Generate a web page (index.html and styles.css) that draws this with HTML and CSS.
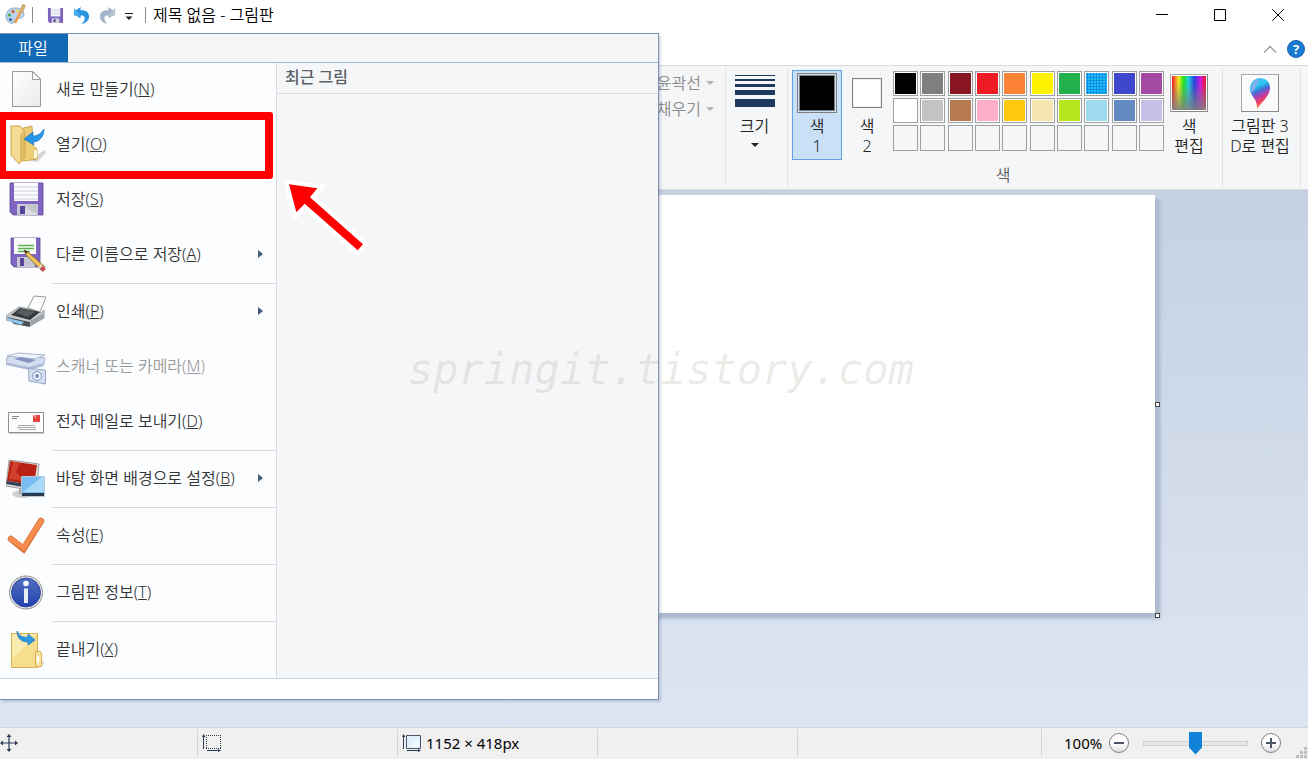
FILE: index.html
```html
<!DOCTYPE html>
<html lang="ko">
<head>
<meta charset="utf-8">
<title>제목 없음 - 그림판</title>
<link rel="stylesheet" href="styles.css">
</head>
<body>
<div class="window">
  <header class="titlebar">
    <svg class="app-icon" viewBox="0 0 22 22" aria-hidden="true">
      <path d="M10 4C4 4 1 8 1 12.500C1 17 5 20 8 19C10 18 9 16 11 15C14 13.500 18 15 19 11C19 6 15 4 10 4Z" fill="#b9d6ea" stroke="#8ba9c0"/>
      <circle cx="4.500" cy="11" r="1.600" fill="#4aa34f"/><circle cx="8" cy="7.500" r="1.600" fill="#e4553a"/><circle cx="12.500" cy="7" r="1.500" fill="#f2d14e"/><circle cx="5.500" cy="15.500" r="1.600" fill="#3e64b8"/>
      <path d="M10 19L16.500 6" stroke="#ec9a4a" stroke-width="2.500"/><path d="M16.500 7L18.500 2" stroke="#d0b078" stroke-width="4" stroke-linecap="round"/>
    </svg>
    <span class="divider"></span>
    <button class="quick" aria-label="저장">
      <svg viewBox="0 0 18 18"><path d="M1 1H17V17H3L1 15Z" fill="#7d63bd"/><path d="M4 1H14V10H4Z" fill="#f3f5fa"/><path d="M5 3.500H13M5 6.500H13" stroke="#c9ccda"/><path d="M5 12H13V17H5Z" fill="#cfd2dc"/><path d="M7 13H9V16H7Z" fill="#4e3e8c"/></svg>
    </button>
    <button class="quick" aria-label="실행 취소">
      <svg viewBox="0 0 18 18"><path d="M1 5L8 0V3.500C14 3 17 6 17 10C17 14 14 17 9 18C12 15 13 12.500 12 10.500C11.300 9 10 8.800 8 9V12L1 8Z" fill="#2b95e2"/><path d="M1 1V9L8 9" fill="#4cafee"/></svg>
    </button>
    <button class="quick" aria-label="다시 실행">
      <svg viewBox="0 0 18 18"><path d="M17 5L10 0V3.500C4 3 1 6 1 10C1 14 4 17 9 18C6 15 5 12.500 6 10.500C6.700 9 8 8.800 10 9V12L17 8Z" fill="#a3b3c7"/><path d="M17 1V9L10 9" fill="#b8c5d4"/></svg>
    </button>
    <button class="quick customize" aria-label="빠른 실행 도구 모음 사용자 지정">
      <svg viewBox="0 0 8 8"><path d="M0 .5H8" stroke="#222"/><path d="M.5 3.500H7.500L4 7Z" fill="#222"/></svg>
    </button>
    <span class="divider"></span>
    <h1 class="title">제목 없음 - 그림판</h1>
    <div class="controls">
      <button aria-label="최소화"><svg viewBox="0 0 12 12"><path d="M0 5.500H12" stroke="#000"/></svg></button>
      <button aria-label="최대화"><svg viewBox="0 0 12 12"><path d="M.5 .5H11.500V11.500H.5Z" fill="none" stroke="#000"/></svg></button>
      <button aria-label="닫기"><svg viewBox="0 0 12 12"><path d="M.2 .2L11.800 11.800M11.800 .2L.2 11.800" stroke="#000"/></svg></button>
    </div>
  </header>

  <div class="tabrow">
    <button class="collapse" aria-label="리본 최소화"><svg viewBox="0 0 14 8"><path d="M1 7.500L7 1.500L13 7.500" fill="none" stroke="#a0a0a0" stroke-width="1.500"/></svg></button>
    <button class="help" aria-label="도움말">?</button>
  </div>

  <section class="ribbon" aria-label="리본">
    <div class="group shapes">
      <button class="drop" disabled>윤곽선<i class="caret"></i></button>
      <button class="drop" disabled>채우기<i class="caret"></i></button>
    </div>
    <div class="group size">
      <button class="tool">
        <svg class="art" viewBox="0 0 40 40"><path d="M0 2H40V3H0ZM0 6H40V8H0ZM0 11H40V14H0ZM0 17H40V22H0ZM0 26H40V34H0Z" fill="#1e3a5f"/></svg>
        <span>크기</span><i class="caret dark"></i>
      </button>
    </div>
    <div class="group colors">
      <div class="group-body">
        <button class="tool selected"><span class="art"><span class="well primary"></span></span><span>색<br>1</span></button>
        <button class="tool"><span class="art"><span class="well"></span></span><span>색<br>2</span></button>
        <div class="palette">
          <button class="swatch black" aria-label="검정"></button><button class="swatch gray" aria-label="회색-50%"></button><button class="swatch maroon" aria-label="진한 빨강"></button><button class="swatch red" aria-label="빨강"></button><button class="swatch orange" aria-label="주황"></button><button class="swatch yellow" aria-label="노랑"></button><button class="swatch green" aria-label="녹색"></button><button class="swatch turquoise" aria-label="옥색"></button><button class="swatch indigo" aria-label="남색"></button><button class="swatch purple" aria-label="자주"></button>
          <button class="swatch white" aria-label="흰색"></button><button class="swatch silver" aria-label="회색-25%"></button><button class="swatch brown" aria-label="갈색"></button><button class="swatch rose" aria-label="장미"></button><button class="swatch gold" aria-label="황금색"></button><button class="swatch cream" aria-label="연한 노랑"></button><button class="swatch lime" aria-label="라임"></button><button class="swatch sky" aria-label="연한 옥색"></button><button class="swatch steel" aria-label="청회색"></button><button class="swatch lavender" aria-label="연보라"></button>
          <button class="swatch" aria-label="사용자 지정 1"></button><button class="swatch" aria-label="사용자 지정 2"></button><button class="swatch" aria-label="사용자 지정 3"></button><button class="swatch" aria-label="사용자 지정 4"></button><button class="swatch" aria-label="사용자 지정 5"></button><button class="swatch" aria-label="사용자 지정 6"></button><button class="swatch" aria-label="사용자 지정 7"></button><button class="swatch" aria-label="사용자 지정 8"></button><button class="swatch" aria-label="사용자 지정 9"></button><button class="swatch" aria-label="사용자 지정 10"></button>
        </div>
        <button class="tool"><span class="art"><span class="picture spectrum"></span></span><span>색<br>편집</span></button>
      </div>
      <div class="group-name">색</div>
    </div>
    <div class="group paint3d">
      <button class="tool">
        <span class="art"><span class="picture"><svg viewBox="0 0 34 34">
          <defs><linearGradient id="drop" x1="0.300" y1="0" x2="0.600" y2="1"><stop offset="0" stop-color="#5cb8f0"/><stop offset=".25" stop-color="#26c8ee"/><stop offset=".42" stop-color="#3f6fd4"/><stop offset=".58" stop-color="#b33fae"/><stop offset=".75" stop-color="#ee3d62"/><stop offset="1" stop-color="#fbb03b"/></linearGradient></defs>
          <path d="M17 2C11 2 7 7 7 13C7 20 15 23 14 33C17 28 27 20 27 12C27 6 23 2 17 2Z" fill="url(#drop)"/><path d="M8 11C10 6 12 4 16 4C13 10 12 14 9 17C8 15 7.500 13 8 11Z" fill="#a6a5ec" opacity=".7"/>
        </svg></span></span>
        <span>그림판 3<br>D로 편집</span>
      </button>
    </div>
  </section>

  <main class="workspace">
    <div class="canvas"><i class="handle side"></i><i class="handle corner"></i></div>
  </main>

  <footer class="status">
    <div class="cell"><svg viewBox="0 0 18 18"><path d="M9 1V17M1 9H17" stroke="#2b3a55" stroke-width="1.200"/><path d="M9 0L11.500 3H6.500ZM9 18L6.500 15H11.500ZM0 9L3 6.500V11.500ZM18 9L15 11.500V6.500Z" fill="#2b3a55"/></svg></div>
    <div class="cell"><svg class="wide" viewBox="0 0 20 18"><path d="M4 1.500H19M4 14.500H19M4.500 1V15M18.500 1V15" fill="none" stroke="#333d50" stroke-dasharray="1 1"/><path d="M1.500 15V2M5 16.500H17" stroke="#2b3a55"/><path d="M1.500 0L3.500 3H0ZM19 16.500L16 18V15Z" fill="#2b3a55"/></svg></div>
    <div class="cell"><svg class="wide" viewBox="0 0 20 18"><path d="M4.500 1.500H18.500V14.500H4.500Z" fill="#dff0fa" stroke="#4c5668"/><path d="M7 13L17 3V13Z" fill="#fff" opacity=".6"/><path d="M1.500 15V2M5 16.500H17" stroke="#2b3a55"/><path d="M1.500 0L3.500 3H0ZM19 16.500L16 18V15Z" fill="#2b3a55"/></svg><span>1152 × 418px</span></div>
    <div class="cell"></div>
    <div class="cell grow"></div>
    <div class="zoom">
      <label for="zoom">100%</label>
      <button class="round" aria-label="축소"><svg viewBox="0 0 10 10"><path d="M0 5H10" stroke="#4c5668" stroke-width="2"/></svg></button>
      <input id="zoom" type="range" min="0" max="100" value="50">
      <button class="round" aria-label="확대"><svg viewBox="0 0 10 10"><path d="M0 5H10M5 0V10" stroke="#4c5668" stroke-width="2"/></svg></button>
    </div>
    <svg class="grip" viewBox="0 0 11 11"><path d="M8 0H11V3H8ZM4 4H7V7H4ZM8 4H11V7H8ZM0 8H3V11H0ZM4 8H7V11H4ZM8 8H11V11H8Z" fill="#bfbfbf"/></svg>
  </footer>

  <div class="filemenu">
    <div class="filemenu-tabs"><button class="filetab">파일</button></div>
    <div class="filemenu-body">
      <nav class="commands" aria-label="파일">
        <button class="command">
          <svg viewBox="0 0 40 40"><defs><linearGradient id="paper" x1="0" y1="0" x2="1" y2="1"><stop offset="0" stop-color="#fff"/><stop offset="1" stop-color="#e9e9e9"/></linearGradient></defs><path d="M6.500 2.500H27L34.500 10V37.500H6.500Z" fill="url(#paper)" stroke="#9b9b9b"/><path d="M26.500 2.500L34.500 10.500H26.500Z" fill="#fff" stroke="#9b9b9b"/></svg>
          <span>새로 만들기(<u>N</u>)</span></button>
        <button class="command">
          <svg viewBox="0 0 40 40"><path d="M24 37L38 26L40 29L31 38Z" fill="#bbb" opacity=".6"/><path d="M14 5L26 2L27 22L31 25V35L17 37Z" fill="#ecce78" stroke="#d0a44a"/><path d="M5 2L14 2L19 8V33L13 40L5 31Z" fill="#f4dc95" stroke="#d0a44a"/><path d="M17 7L19 8V33L14 39V12Z" fill="#dcb356" opacity=".8"/><path d="M28 26H31V34H28Z" fill="#fff7da"/><path d="M18 15L27 8L27 12C32 12 35 9 38 5C38 13 33 18 27 18L28 21Z" fill="#2696e8" stroke="#1872bd" stroke-width=".7"/></svg>
          <span>열기(<u>O</u>)</span></button>
        <button class="command">
          <svg viewBox="0 0 40 40"><path d="M4 4H37V36H7L4 33Z" fill="#7f64c2" stroke="#5d4796" stroke-width=".8"/><path d="M8 4H32V22H8Z" fill="#fbfbfe"/><path d="M8 8H32M8 12H32M8 16H32M8 20H32" stroke="#ccd0dc"/><path d="M11 25H32V36H11Z" fill="#c5c7d0"/><path d="M13 25L32 36H20Z" fill="#eee" opacity=".6"/><path d="M14 27H19V35H14Z" fill="#59459c"/></svg>
          <span>저장(<u>S</u>)</span></button>
        <button class="command">
          <svg viewBox="0 0 40 40"><path d="M5 4H34V33H8L5 30Z" fill="#7f64c2" stroke="#5d4796" stroke-width=".8"/><path d="M8 4H30V20H8Z" fill="#fbfbfe"/><path d="M12 11.500H28M12 14.500H28M12 17.500H24" stroke="#5bb04e" stroke-width="1.500"/><path d="M11 23H29V33H11Z" fill="#c5c7d0"/><path d="M14 24H18V32H14Z" fill="#59459c"/><path d="M18 16L22 18L39 33L36 37L20 21Z" fill="#edc35d" stroke="#7b5a2a" stroke-width=".8"/><path d="M18 16L22 17.500L20 20Z" fill="#333"/><path d="M36 31.500L40 35L37 38L33.500 34.500Z" fill="#c9555b"/><path d="M35 30.500L36.500 32L33.500 35L32 33.500Z" fill="#ddd"/></svg>
          <span>다른 이름으로 저장(<u>A</u>)</span><i class="more"></i></button>
        <hr>
        <button class="command">
          <svg viewBox="0 0 40 40"><path d="M22 17L28 5L40 6L34 21Z" fill="#fcfcfc" stroke="#999"/><path d="M0 25L13 16L24 18L35 22L38 19V27L24 35L0 29Z" fill="#c9ccce" stroke="#888" stroke-width=".8"/><path d="M5 24L14 17L34 21L24 29Z" fill="#34393c"/><path d="M10 22L15 18L29 21L22 26Z" fill="#575c60"/><path d="M1 26L24 31V36L8 33Z" fill="#4a4f52"/><path d="M2 27L18 31L15 34L1 29Z" fill="#8fc9ee"/><path d="M24 30L38 22V27L25 35Z" fill="#9fa4a7"/></svg>
          <span>인쇄(<u>P</u>)</span><i class="more"></i></button>
        <button class="command" disabled>
          <svg viewBox="0 0 40 40"><path d="M1 11L12 9L39 12L38 18L23 22L0 17Z" fill="#d5def0" stroke="#a9b7d2"/><path d="M1 10L12 7L39 9L29 13Z" fill="#f1f5fb" stroke="#a9b7d2"/><path d="M8 13L15 11L30 14L23 17Z" fill="#8793c4"/><path d="M0 17L23 21L38 17V20L23 24L0 19Z" fill="#aebbd8"/><path d="M22.500 22.500L39.500 24V38L23 35Z" fill="#d5dff0" stroke="#96a7ca"/><circle cx="31" cy="30" r="4.500" fill="#eef3fb" stroke="#7d91bd"/><circle cx="31" cy="30" r="2" fill="#7d91bd"/></svg>
          <span>스캐너 또는 카메라(<u>M</u>)</span></button>
        <button class="command">
          <svg viewBox="0 0 40 40"><path d="M2.500 11.500H37.500V31.500H2.500Z" fill="#fcfcfc" stroke="#8f8f8f"/><path d="M3 32.500H38" stroke="#ccc"/><path d="M27 14H34V21H27Z" fill="#e4453f"/><path d="M27 14H30V18Z" fill="#f5a09b"/><path d="M6 15.500H13M6 17.500H11" stroke="#888"/><path d="M12 24.500H29M11 26.500H30M13 28.500H30" stroke="#aaa"/></svg>
          <span>전자 메일로 보내기(<u>D</u>)</span></button>
        <hr>
        <button class="command">
          <svg viewBox="0 0 40 40"><ellipse cx="17" cy="36" rx="11" ry="4" fill="#d0d0d0"/><path d="M13 28H23V36H13Z" fill="#aaa"/><path d="M3 2L33 6L30 33L0 28Z" fill="#e4e4e4" stroke="#9a9a9a"/><path d="M4 3L31 7L28 27L1 23Z" fill="#b82315"/><path d="M7 4L14 5L10 14L18 23L3 21Z" fill="#dc4e34" opacity=".7"/><path d="M1 23L28 27V31L0 26Z" fill="#354356"/><path d="M15.500 18.500H38.500V38.500H15.500Z" fill="#78bdf0" stroke="#b9c8d4"/><path d="M17 34L36 19H38V34Z" fill="#a9dafa"/><path d="M16 35H38V38H16Z" fill="#293a50"/></svg>
          <span>바탕 화면 배경으로 설정(<u>B</u>)</span><i class="more"></i></button>
        <hr>
        <button class="command">
          <svg viewBox="0 0 40 40"><path d="M5 24L17.500 34L35 6" fill="none" stroke="#d56e38" stroke-width="6.500" stroke-linecap="round"/><path d="M5 24L17.500 33L35 6" fill="none" stroke="#f68d4e" stroke-width="5" stroke-linecap="round"/></svg>
          <span>속성(<u>E</u>)</span></button>
        <hr>
        <button class="command">
          <svg viewBox="0 0 40 40"><defs><linearGradient id="info" x1="0" y1="0" x2="0" y2="1"><stop offset="0" stop-color="#5270bf"/><stop offset="1" stop-color="#2141ad"/></linearGradient></defs><circle cx="20" cy="20.500" r="16.500" fill="#ededed" stroke="#8b8b8b"/><circle cx="20" cy="20.500" r="14.500" fill="url(#info)" stroke="#3049a0"/><circle cx="20" cy="11.500" r="2.800" fill="#fff"/><path d="M18 16.500H22V31H18Z" fill="#e8ebf3"/></svg>
          <span>그림판 정보(<u>T</u>)</span></button>
        <hr>
        <button class="command">
          <svg viewBox="0 0 40 40"><path d="M28 36L38 32V35L32 39Z" fill="#ccc" opacity=".7"/><path d="M5.500 4.500H31.500V38.500H5.500Z" fill="#f5df8f" stroke="#d8ae4e"/><path d="M6 5H31L6 30Z" fill="#faefbe" opacity=".7"/><path d="M29.500 22.500H34.500L35.500 25V37.500H29.500Z" fill="#f7e4a0" stroke="#d8ae4e"/><path d="M31 27H33V34H31Z" fill="#fff"/><path d="M11 2C13 7 17 9 22 8L22 5L29 11L22 16V13C15 13 11 9 11 2Z" fill="#2b98e4" stroke="#1a73bb" stroke-width=".7"/></svg>
          <span>끝내기(<u>X</u>)</span></button>
      </nav>
      <section class="recent"><h2>최근 그림</h2></section>
    </div>
    <div class="filemenu-foot"></div>
    <div class="highlight"></div>
    <svg class="pointer" viewBox="0 0 90 90"><path d="M9 9.300L37.300 13.300L30 22.300L83 69.300L77.700 75.300L24.700 28.700L16.300 37.300Z" fill="#f00" stroke="#fff" stroke-width="9" paint-order="stroke"/></svg>
  </div>
  <div class="watermark">springit.tistory.com</div>
</div>
</body>
</html>
```

FILE: styles.css
```css
* { box-sizing: border-box; }

body {
  margin: 0;
  font: 350 16px/20px "Noto Sans", "Noto Sans CJK KR", sans-serif;
  color: #222;
  background: #fff;
}

button {
  padding: 0;
  border: 0;
  background: none;
  font: inherit;
  color: inherit;
}

svg { display: block; flex: none; }

.window {
  position: relative;
  display: flex;
  flex-direction: column;
  min-height: 100vh;
  padding-bottom: 1px;
  overflow: hidden;
}

/* Title bar */
.titlebar {
  display: flex;
  align-items: center;
  height: 33px;
  padding: 0 1px 3px 5px;
}
.app-icon { width: 22px; height: 22px; margin-right: 5px; }
.divider { width: 1px; height: 16px; background: #8a8a8a; }
.quick { margin-left: 9px; }
.quick svg { width: 17px; height: 17px; }
.divider + .quick { margin-left: 14px; }
.customize { margin: 4px 12px 0 9px; }
.customize svg { width: 8px; height: 8px; }
.title { margin: 0 0 0 7px; font-size: 16px; font-weight: inherit; color: #000; }
.controls { display: flex; margin-left: auto; }
.controls button {
  display: flex;
  align-items: center;
  justify-content: center;
  width: 58px;
  height: 30px;
}
.controls svg { width: 12px; height: 12px; }

/* Tab row */
.tabrow {
  display: flex;
  align-items: center;
  justify-content: flex-end;
  gap: 10px;
  height: 32px;
  padding-right: 3px;
}
.collapse svg { width: 14px; height: 8px; }
.help {
  width: 18px;
  height: 18px;
  border: 1px solid #1b5fae;
  border-radius: 50%;
  background: #1779d0;
  color: #fff;
  font-size: 13px;
  font-weight: 700;
  line-height: 16px;
}

/* Ribbon */
.ribbon {
  display: flex;
  height: 125px;
  padding: 2px 0;
  border-top: 1px solid #dadbdc;
  border-bottom: 1px solid #dadbdc;
  background: #f5f6f7;
}
.group {
  display: flex;
  flex-direction: column;
  padding: 2px 4px;
  border-right: 1px solid #e2e3e4;
}
.group-body { display: flex; }
.group-name { margin-top: 5px; padding-right: 4px; text-align: center; color: #5a5a5a; }
.shapes { align-items: flex-end; gap: 6px; width: 726px; padding: 5px 11px; }
.size { align-items: center; width: 62px; padding-right: 8px; }
.colors { width: 435px; }
.paint3d { align-items: center; width: 78px; padding: 2px 3px 2px 0; }
.drop { display: flex; align-items: center; gap: 5px; color: #8c8c8c; }
.caret {
  border: 4px solid transparent;
  border-top-color: #b4b4b4;
  border-bottom: 0;
}
.caret.dark { margin-top: 7px; border-width: 4px 4px 0; border-top-color: #222; }
.tool {
  display: flex;
  flex-direction: column;
  align-items: center;
  min-width: 50px;
  height: 90px;
  border: 1px solid transparent;
}
.tool.selected { border-color: #62a2e4; background: #c9e0f7; }
.art {
  display: flex;
  align-items: center;
  justify-content: center;
  height: 44px;
  margin-bottom: 1px;
}
svg.art { width: 40px; height: 40px; margin: 2px 0 3px; }
.well {
  width: 30px;
  height: 30px;
  border: 1px solid #808080;
  background: #fff;
  box-shadow: inset 0 0 0 1px #f0f0f0;
}
.well.primary {
  width: 40px;
  height: 40px;
  border-color: #808080;
  background: #000;
  box-shadow: inset 0 0 0 1px #c9e0f7, inset 0 0 0 2px #808080;
}
.palette {
  display: grid;
  grid-template-columns: repeat(10, 25px);
  justify-content: space-between;
  align-content: start;
  gap: 2px 0;
  width: 271px;
  margin: 1px 0 0 1px;
}
.swatch {
  height: 25px;
  border: 1px solid #a0a0a0;
  box-shadow: inset 0 0 0 1px #fff;
}
.swatch:nth-child(n+21) { height: 26px; box-shadow: none; }
.black { background: #000; }
.gray { background: #7f7f7f; }
.maroon { background: #881521; }
.red { background: #ed1c24; }
.orange { background: #fb8234; }
.yellow { background: #fff200; }
.green { background: #22b14c; }
.turquoise { background: radial-gradient(circle at 1px 1px, #25bdf2 1px, transparent 1px) 0 0 / 3px 3px #098fe6; }
.indigo { background: #3f48cc; }
.purple { background: #a349a4; }
.white { background: #fff; }
.silver { background: #c3c3c3; }
.brown { background: #b7794f; }
.rose { background: #ffaec9; }
.gold { background: #ffc90e; }
.cream { background: #f7e5b0; }
.lime { background: #b5e61d; }
.sky { background: #9ed9f2; }
.steel { background: #628ac0; }
.lavender { background: #c8bfe7; }
.picture {
  width: 38px;
  height: 38px;
  padding: 1px;
  border: 1px solid #aaa;
  border-right-color: #8a8a8a;
  border-bottom-color: #8a8a8a;
  background: #fafafa;
}
.spectrum {
  background:
    linear-gradient(rgba(128, 128, 128, 0) 20%, rgba(128, 128, 128, .9)) content-box,
    linear-gradient(90deg, #f01820, #f5822c 10%, #eeee20 20%, #20e020 34%, #20d0d8 48%, #2840e0 66%, #d018e0 84%, #f01820) content-box,
    #fff;
}

/* Drawing area */
.workspace {
  flex: 1;
  padding: 5px 3px;
  background: linear-gradient(#c5d0e1, #dce6f3);
}
.canvas {
  position: relative;
  width: 1152px;
  height: 418px;
  background: #fff;
  box-shadow: 4px 4px 2px #adbacd, 6px 6px 3px #b7c4d6;
}
.handle {
  position: absolute;
  right: -5px;
  width: 5px;
  height: 5px;
  border: 1px solid #444;
  background: #fff;
}
.side { top: 207px; }
.corner { bottom: -5px; }

/* Status bar */
.status {
  position: relative;
  display: flex;
  height: 32px;
  padding: 1px 0 2px;
  border-top: 1px solid #d5d5d5;
  background: #f0f0f0;
  font-size: 15px;
  font-weight: 400;
  color: #000;
}
.cell {
  display: flex;
  align-items: center;
  gap: 4px;
  width: 200px;
  padding-left: 4px;
  border-right: 1px solid #d4d4d4;
}
.cell:first-child { width: 198px; padding-left: 0; }
.cell svg { width: 18px; height: 18px; }
.cell svg.wide { width: 20px; }
.grow { flex: 1; }
.zoom { display: flex; align-items: center; padding: 0 27px 0 22px; }
.round {
  display: flex;
  align-items: center;
  justify-content: center;
  width: 20px;
  height: 20px;
  border: 1px solid #808080;
  border-radius: 50%;
  background: linear-gradient(#fff 50%, #ddd);
}
.round svg { width: 10px; height: 10px; }
.zoom label { width: 45px; }
#zoom {
  appearance: none;
  width: 105px;
  height: 24px;
  margin: 0 13px 0 14px;
  background: none;
}
#zoom::-webkit-slider-runnable-track {
  height: 5px;
  border: 1px solid #cfcfcf;
  background: #e7e7e7;
}
#zoom::-webkit-slider-thumb {
  appearance: none;
  width: 13px;
  height: 23px;
  margin-top: -10px;
  background: #1083d8;
  clip-path: polygon(0 0, 100% 0, 100% 70%, 50% 100%, 0 70%);
}
.grip { position: absolute; right: 1px; bottom: 1px; width: 11px; height: 11px; }

/* File menu */
.filemenu {
  position: absolute;
  top: 33px;
  left: 0;
  width: 659px;
  border: 1px solid #7c8fb0;
  border-left: 0;
  background: #fcfdff;
  box-shadow: 2px 2px 2px rgba(60, 80, 110, .2);
}
.filemenu-tabs { border-bottom: 1px solid #a5b9cf; background: #f5f6f8; }
.filetab { display: block; width: 68px; height: 28px; padding-right: 2px; background: #1168b5; color: #fff; }
.filemenu-body { display: flex; }
.commands {
  width: 277px;
  border-right: 1px solid #dadde2;
}
.command {
  display: flex;
  align-items: center;
  gap: 10px;
  width: 100%;
  height: 55px;
  padding: 0 13px 3px 6px;
  text-align: left;
  color: #333;
}
.command:disabled { color: #9a9a9a; }
.command svg { width: 40px; height: 40px; }
.more {
  margin-left: auto;
  border: 4px solid transparent;
  border-left: 5px solid #44597c;
  border-right: 0;
}
.commands hr {
  height: 2px;
  margin: 0 0 0 53px;
  border: 0;
  border-top: 1px solid #d8dade;
}
.recent { flex: 1; background: #f5f6f8; }
.recent h2 {
  margin: 0;
  padding: 4px 8px 6px;
  border-bottom: 1px solid #dadde2;
  font-size: 16px;
  font-weight: 500;
  line-height: 20px;
  color: #5a5f68;
}
.filemenu-foot { height: 21px; border-top: 1px solid #c6d1e2; background: #fff; }
.highlight {
  position: absolute;
  top: 78px;
  left: -2px;
  width: 275px;
  height: 67px;
  border: 8px solid #f00;
  border-radius: 3px;
  box-shadow: 0 0 0 3px #fff;
}
.pointer { position: absolute; top: 141px; left: 280px; width: 90px; height: 90px; }

.watermark {
  position: absolute;
  top: 340px;
  left: 408px;
  font: italic 42px/60px "DejaVu Sans Mono", monospace;
  color: rgba(130, 130, 110, .16);
  pointer-events: none;
}
```
